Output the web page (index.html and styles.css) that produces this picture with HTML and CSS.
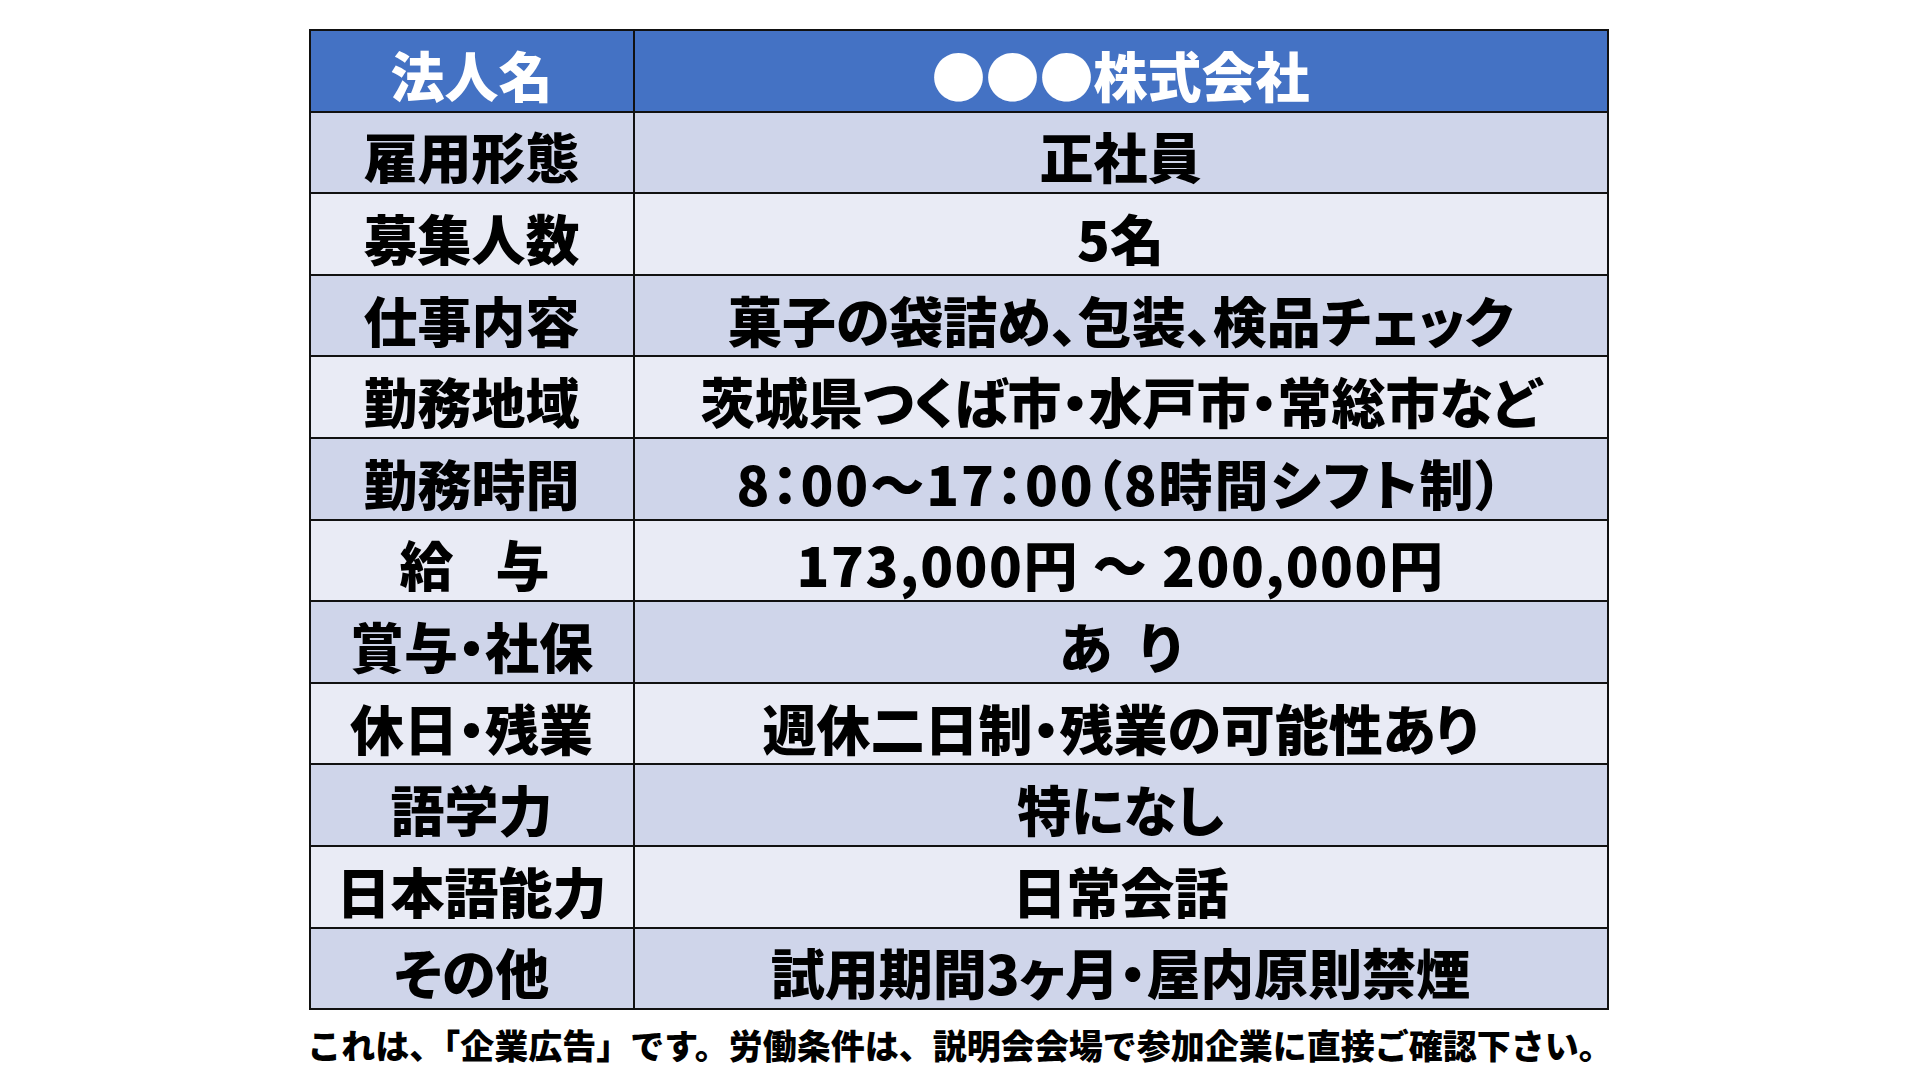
FILE: index.html
```html
<!DOCTYPE html>
<html lang="ja">
<head>
<meta charset="utf-8">
<title>求人票</title>
<link rel="stylesheet" href="styles.css">
</head>
<body>
<main class="page">
  <table class="job">
    <colgroup><col class="col-label"><col class="col-value"></colgroup>
    <thead>
      <tr class="head"><th>法人名</th><th>●●●株式会社</th></tr>
    </thead>
    <tbody>
      <tr class="dark"><td>雇用形態</td><td>正社員</td></tr>
      <tr class="light"><td>募集人数</td><td>5名</td></tr>
      <tr class="dark"><td>仕事内容</td><td>菓子の袋詰め、包装、検品チェック</td></tr>
      <tr class="light"><td>勤務地域</td><td>茨城県つくば市・水戸市・常総市など</td></tr>
      <tr class="dark"><td>勤務時間</td><td class="spaced">8：00～17：00（8時間シフト制）</td></tr>
      <tr class="light"><td class="tight">給　与</td><td class="wide">173,000円 ～ 200,000円</td></tr>
      <tr class="dark"><td>賞与・社保</td><td>あ&ensp;り</td></tr>
      <tr class="light"><td>休日・残業</td><td>週休二日制・残業の可能性あり</td></tr>
      <tr class="dark"><td>語学力</td><td>特になし</td></tr>
      <tr class="light"><td>日本語能力</td><td>日常会話</td></tr>
      <tr class="dark"><td>その他</td><td>試用期間3ヶ月・屋内原則禁煙</td></tr>
    </tbody>
  </table>
  <p class="note">これは、「企業広告」です。労働条件は、説明会会場で参加企業に直接ご確認下さい。</p>
</main>
</body>
</html>
```
FILE: styles.css
```css
html, body {
  margin: 0;
  padding: 0;
  background: #ffffff;
}
body {
  width: 1920px;
  height: 1080px;
  overflow: hidden;
  font-family: "Noto Sans CJK JP", "Noto Sans", sans-serif;
}
.page {
  display: flex;
  flex-direction: column;
  align-items: center;
  padding-top: 29px;
}
.job {
  width: 1298px;
  margin-left: -3px;
  border-collapse: collapse;
  table-layout: fixed;
  border: 2px solid #000;
}
.col-label { width: 324px; }
.col-value { width: 974px; }
.job th,
.job td {
  height: 81.6px;
  box-sizing: border-box;
  padding: 8px 0 0 0;
  border: 2px solid #111;
  text-align: center;
  vertical-align: middle;
  font-size: 54px;
  line-height: 1;
  font-weight: 900;
  font-feature-settings: "palt";
  white-space: nowrap;
  color: #000;
}
.job td.spaced { letter-spacing: 2px; }
.job td.wide { letter-spacing: 1.5px; }
.job td.tight { letter-spacing: -6px; }
.head th {
  background: #4472c4;
  color: #fff;
}
.dark td { background: #cfd5ea; }
.light td { background: #e9ebf5; }
.note {
  margin: 16px 0 0 0;
  font-size: 34px;
  line-height: 1.1;
  font-weight: 900;
  color: #000;
  white-space: nowrap;
}
```
